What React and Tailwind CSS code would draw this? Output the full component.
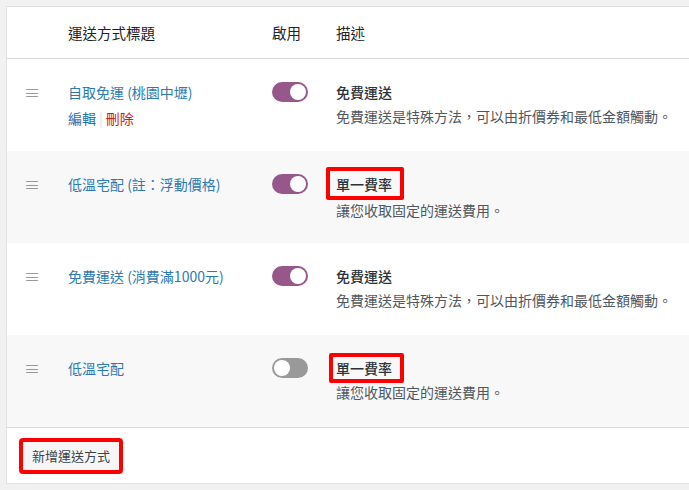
import React from 'react';

const rows = [
    { title: '自取免運 (桃園中壢)', on: true, method: '免費運送', desc: '免費運送是特殊方法，可以由折價券和最低金額觸動。', links: true },
    { title: '低溫宅配 (註：浮動價格)', on: true, method: '單一費率', desc: '讓您收取固定的運送費用。', mark: 'a' },
    { title: '免費運送 (消費滿1000元)', on: true, method: '免費運送', desc: '免費運送是特殊方法，可以由折價券和最低金額觸動。' },
    { title: '低溫宅配', on: false, method: '單一費率', desc: '讓您收取固定的運送費用。', mark: 'b' },
];

const Toggle = ({ on }) => (
    <span className={`relative inline-block w-[36px] h-[20px] rounded-full ${on ? 'bg-[#96588a]' : 'bg-[#999]'}`}>
        <span className={`absolute top-[2px] w-[16px] h-[16px] rounded-full bg-white ${on ? 'left-[18px]' : 'left-[2px]'}`}></span>
    </span>
);

const App = () => {
    return (
        <div
            className="min-h-[490px] bg-[#f1f1f1] pl-[6px] pt-[6px] pb-[6px] text-[14px] text-[#3c434a] overflow-hidden"
            style={{ fontFamily: '"Noto Sans CJK TC", "Noto Sans", sans-serif' }}
        >
            <div className="bg-white border-l border-t border-b border-[#e2e2e2] w-[720px]">
                {/* header */}
                <div className="flex items-center h-[52px] border-b border-[#dcdcdc] leading-[20px] text-[#1d2327] text-[14.5px]">
                    <div className="w-[61px]"></div>
                    <div className="w-[204px]">運送方式標題</div>
                    <div className="w-[64px]">啟用</div>
                    <div>描述</div>
                </div>

                {rows.map((r, i) => (
                    <div key={i} className={`flex h-[92px] pt-[23px] leading-[20px] ${i % 2 ? 'bg-[#f8f8f8]' : 'bg-white'}`}>
                        <div className="w-[61px] pl-[17px]">
                            <span className="text-[#999] text-[16px] leading-[20px]">≡</span>
                        </div>
                        <div className="w-[204px]">
                            <div className="text-[#2d7ab0]">{r.title}</div>
                            <div className={`mt-[6px] ${r.links ? '' : 'invisible'}`}>
                                <span className="text-[#1f6ea6]">編輯</span>
                                <span className="text-[#ddd] mx-[3px]">|</span>
                                <span className="text-[#cc1818]">刪除</span>
                            </div>
                        </div>
                        <div className="w-[64px]">
                            <Toggle on={r.on} />
                        </div>
                        <div>
                            <div className={`relative inline-block font-medium text-[#2c3338] ${r.mark === 'a' ? '-mt-[2px]' : ''}`}>
                                {r.method}
                                {r.mark === 'a' && (
                                    <span className="absolute left-[-10px] right-[-12px] top-[-7px] bottom-[-6px] border-[4px] border-[#f00] rounded-[2px]"></span>
                                )}
                                {r.mark === 'b' && (
                                    <span className="absolute left-[-7px] right-[-12px] top-[-5px] bottom-[-5px] border-[4px] border-[#f00] rounded-[2px]"></span>
                                )}
                            </div>
                            <div className={`mt-[4px] text-[#50575e] ${r.mark === 'a' ? 'pt-[2px]' : ''}`}>{r.desc}</div>
                        </div>
                    </div>
                ))}

                {/* footer */}
                <div className="border-t border-[#dcdcdc] h-[56px] pl-[12px] pt-[10px]">
                    <div className="inline-block border-[4px] border-[#f00] rounded-[4px]">
                        <button className="block bg-[#f6f6f6] text-[#3c434a] text-[13px] leading-[28px] px-[9px]">新增運送方式</button>
                    </div>
                </div>
            </div>
        </div>
    );
};

export default App;
